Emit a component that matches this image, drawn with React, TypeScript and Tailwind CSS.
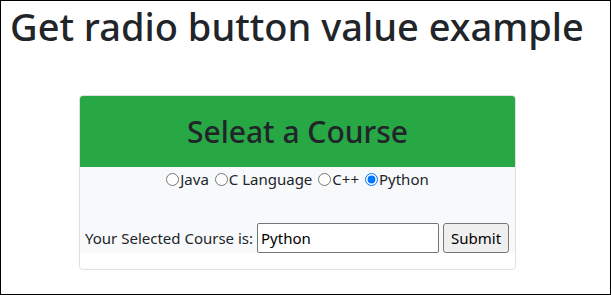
import { useState } from 'react';

const courses = ['Java', 'C Language', 'C++', 'Python'];

export default function App() {
  const [course, setCourse] = useState('Python');

  return (
    <div className="w-[611px] h-[295px] border border-black bg-white text-[#212529] font-['Noto_Sans','Open_Sans',sans-serif] overflow-hidden">
      <h1 className="text-[38px] font-medium leading-[48px] pl-[9px] pt-[1px] whitespace-nowrap">Get radio button value example</h1>

      <div className="ml-[78px] mt-[45px] w-[437px] h-[175px] border border-[#dfdfdf] rounded-[4px] overflow-hidden">
        <div className="bg-[#28a745] h-[71px] flex items-center justify-center">
          <h2 className="text-[30px] font-medium leading-[38px] whitespace-nowrap">Seleat a Course</h2>
        </div>

        <div className="bg-[#f8f9fa] h-[86px] flex flex-col">
          <div className="h-[24px] flex items-center justify-center text-[15px] leading-[24px]">
            {courses.map((c, i) => (
              <label key={c} className="flex items-center">
                {i > 0 && <span className="w-[6px]" />}
                <input
                  type="radio"
                  name="course"
                  value={c}
                  checked={course === c}
                  onChange={() => setCourse(c)}
                  className="w-[13px] h-[13px] m-0 mt-[1px] mr-[1px]"
                />
                <span>{c}</span>
              </label>
            ))}
          </div>

          <div className="mt-auto flex items-center pl-[5px] text-[15px] whitespace-nowrap">
            <span className="mr-[4px]">Your Selected Course is:</span>
            <input
              type="text"
              value={course}
              readOnly
              className="w-[182px] h-[30px] border border-[#767676] rounded-[2px] bg-white px-[3px] text-[15px] text-black"
            />
            <button className="ml-[4px] w-[66px] h-[30px] border border-[#767676] rounded-[3px] bg-[#efefef] text-[15px] text-black">
              Submit
            </button>
          </div>
        </div>
      </div>
    </div>
  );
}
